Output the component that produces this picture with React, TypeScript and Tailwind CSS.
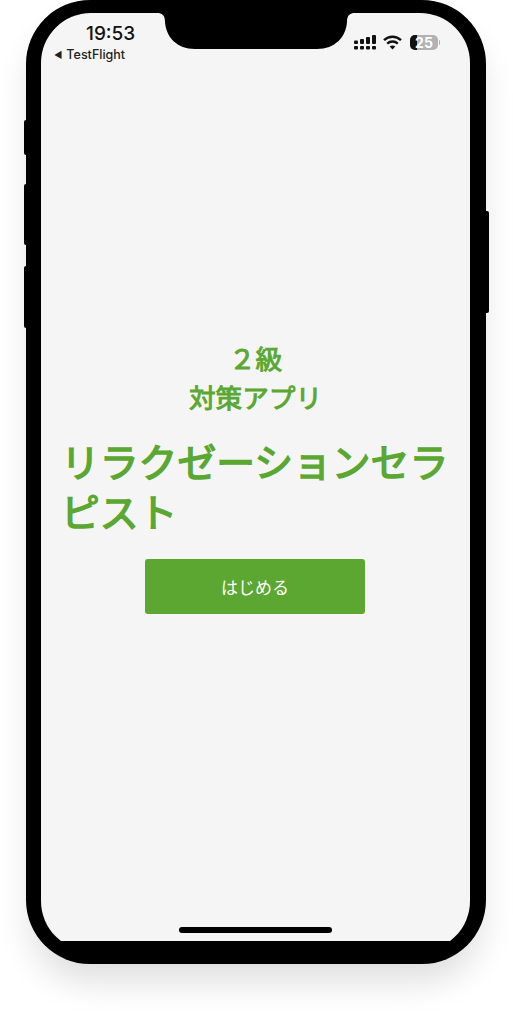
const font = { fontFamily: '"Noto Sans CJK JP", sans-serif' };

function Notch() {
  return (
    <svg className="absolute left-[131px] top-[12px]" width="198" height="38" viewBox="0 0 198 38">
      <path d="M0 0 H198 V1 C193 1 190 3 190 10 C189 25 178 37 160 37 H38 C20 37 9 25 8 10 C8 3 5 1 0 1 Z" fill="#000" />
    </svg>
  );
}

function SignalIcon() {
  return (
    <svg width="22" height="15" viewBox="0 0 22 15" fill="#111">
      <rect x="0" y="11" width="4" height="3.6" rx="1" />
      <rect x="6" y="11" width="4" height="3.6" rx="1" />
      <rect x="12" y="11" width="4" height="3.6" rx="1" />
      <rect x="18" y="11" width="4" height="3.6" rx="1" />
      <rect x="0" y="5.5" width="4" height="3.6" rx="1" />
      <rect x="6" y="4" width="4" height="5" rx="1" />
      <rect x="12" y="2" width="4" height="7" rx="1" />
      <rect x="18" y="0" width="4" height="9" rx="1" />
    </svg>
  );
}

function WifiIcon() {
  return (
    <svg width="19" height="15" viewBox="0 0 19 15" fill="none" stroke="#111" strokeWidth="2.4">
      <path d="M1 5.2 C5.8 0.6 13.2 0.6 18 5.2" />
      <path d="M4.2 8.6 C7.2 5.8 11.8 5.8 14.8 8.6" />
      <path d="M9.5 14.6 L6.7 11.4 C8.3 10.1 10.7 10.1 12.3 11.4 Z" fill="#111" stroke="none" />
    </svg>
  );
}

function Battery() {
  return (
    <div className="flex items-center gap-[1px]">
      <div className="relative flex h-[15px] w-[28px] items-center justify-center overflow-hidden rounded-[5px] bg-[#b2b2b2]">
        <div className="absolute bottom-0 left-0 top-0 w-[7px] bg-[#111]" />
        <span className="relative text-[14px] font-bold leading-none text-white" style={{ fontFamily: 'Inter, sans-serif' }}>
          25
        </span>
      </div>
      <div className="h-[5px] w-[1px] rounded-r bg-[#b2b2b2]" />
    </div>
  );
}

export default function App() {
  return (
    <div className="h-[1016px] w-[513px] overflow-hidden bg-white">
      <div className="relative ml-[26px] h-[964px] w-[460px] rounded-[64px] bg-black pl-[15px] pt-[13px] shadow-[0_22px_36px_-6px_rgba(0,0,0,0.14)]">
        {/* side buttons */}
        <div className="absolute left-[-2px] top-[120px] h-[35px] w-[3px] rounded-l-[2px] bg-black" />
        <div className="absolute left-[-2px] top-[184px] h-[61px] w-[3px] rounded-l-[2px] bg-black" />
        <div className="absolute left-[-2px] top-[266px] h-[62px] w-[3px] rounded-l-[2px] bg-black" />
        <div className="absolute right-[-3px] top-[211px] h-[102px] w-[4px] rounded-r-[2px] bg-black" />

        {/* screen is cut off flat above the bottom bezel */}
        <div className="h-[928px] w-[429px] overflow-hidden">
          <div className="flex h-[938px] w-[429px] flex-col rounded-[50px] bg-[#f5f5f5] antialiased">
            <div className="flex h-[50px] shrink-0 justify-between pl-[13px] pr-[30px]">
              <div className="flex flex-col" style={{ fontFamily: 'Inter, sans-serif' }}>
                <span className="ml-[32px] mt-[9px] text-[19px] font-medium leading-[23px] text-[#111]">19:53</span>
                <span className="mt-[3px] flex items-center gap-[4px] text-[12.5px] font-medium leading-[14px] text-[#222]">
                  <span className="text-[9px]">◀</span>
                  TestFlight
                </span>
              </div>
              <div className="mt-[22px] flex h-[15px] items-start">
                <SignalIcon />
                <div className="ml-[7px]">
                  <WifiIcon />
                </div>
                <div className="ml-[8px]">
                  <Battery />
                </div>
              </div>
            </div>

            <div className="flex flex-col items-center pt-[275px]" style={font}>
              <p className="text-center text-[26.6px] leading-[39px] text-[#5aa832] [-webkit-text-stroke:1px_#5aa832]">
                ２級
                <br />
                対策アプリ
              </p>
              <h1 className="mt-[19px] w-full pl-[20px] text-[38.8px] font-normal leading-[50px] text-[#5aa832] [-webkit-text-stroke:1.5px_#5aa832]">
                リラクゼーションセラピスト
              </h1>
              <button className="mr-[1px] mt-[24px] flex h-[55px] w-[220px] items-center justify-center rounded-[3px] bg-[#5ca731] text-[17px] text-white">
                はじめる
              </button>
            </div>
          </div>
        </div>

        <Notch />
        <div className="absolute left-[153px] top-[927px] h-[6px] w-[153px] rounded-full bg-black" />
      </div>
    </div>
  );
}
